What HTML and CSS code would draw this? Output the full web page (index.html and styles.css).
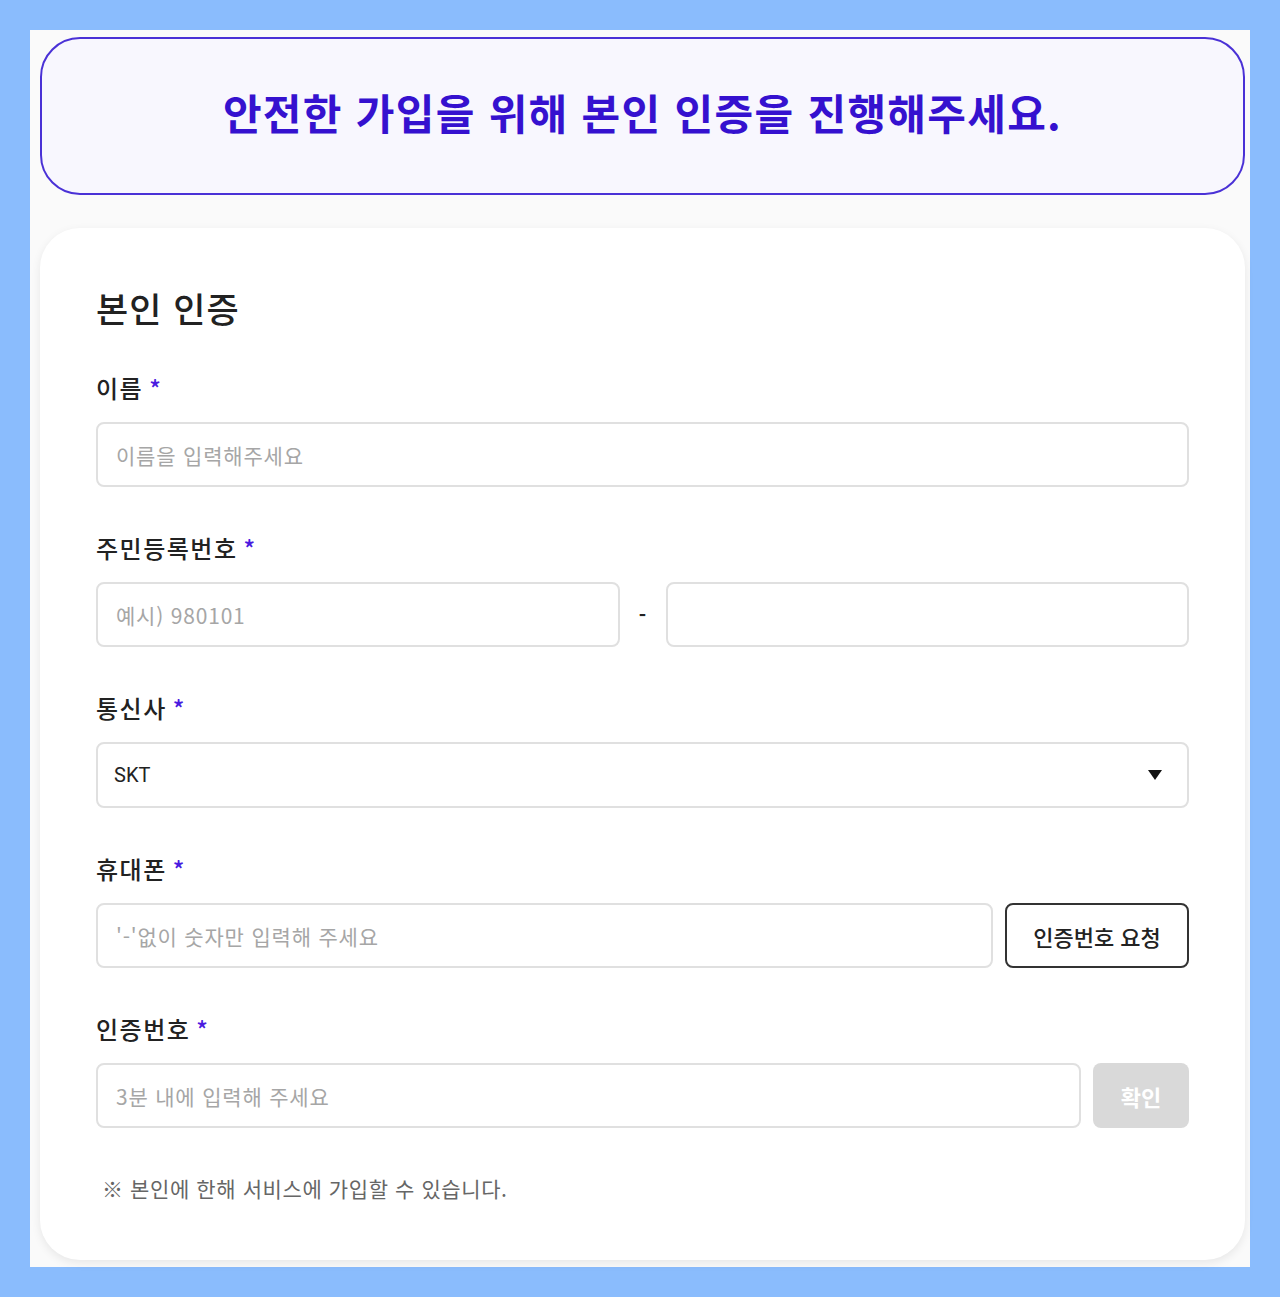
FILE: index.html
```html
<!DOCTYPE html>
<html lang="ko">
    <head>
        <meta charset="UTF-8" />
        <meta name="viewport" content="width=device-width, initial-scale=1.0" />
        <title>본인 인증</title>
        <link rel="stylesheet" href="styles.css">
    </head>
    <body>
        <div class="page">
            <div class="notice">
                <h1>안전한 가입을 위해 본인 인증을 진행해주세요.</h1>
            </div>

            <div class="card">
                <h2>본인 인증</h2>

                <div class="field">
                    <label>이름<span class="req">*</span></label>
                    <input type="text" placeholder="이름을 입력해주세요">
                </div>

                <div class="field">
                    <label>주민등록번호<span class="req">*</span></label>
                    <div class="row">
                        <input type="text" placeholder="예시) 980101">
                        <span class="dash">-</span>
                        <input type="password">
                    </div>
                </div>

                <div class="field">
                    <label>통신사<span class="req">*</span></label>
                    <div class="select">
                        <span>SKT</span>
                        <svg width="16" height="12" viewBox="0 0 16 12">
                            <path d="M1 1h14L8 11z" fill="#111" />
                        </svg>
                    </div>
                </div>

                <div class="field">
                    <label>휴대폰<span class="req">*</span></label>
                    <div class="row">
                        <input type="text" placeholder="'-'없이 숫자만 입력해 주세요">
                        <button class="btn-outline">인증번호 요청</button>
                    </div>
                </div>

                <div class="field">
                    <label>인증번호<span class="req">*</span></label>
                    <div class="row">
                        <input type="text" placeholder="3분 내에 입력해 주세요">
                        <button class="btn-disabled">확인</button>
                    </div>
                </div>

                <p class="note">※ 본인에 한해 서비스에 가입할 수 있습니다.</p>
            </div>
        </div>
    </body>
</html>
```

FILE: styles.css
```css
* {
    box-sizing: border-box;
}
body {
    margin: 0;
    padding: 30px;
    background-color: #8abcfd;
    font-family: "Noto Sans CJK KR", "Noto Sans", sans-serif;
    color: #222;
}
.page {
    background-color: #fafafa;
    padding: 7px 5px 7px 10px;
    height: 1237px;
}
.notice {
    height: 158px;
    border: 2px solid #4a31d6;
    border-radius: 40px;
    background-color: #f8f7fe;
    display: flex;
    align-items: center;
    justify-content: center;
}
.notice h1 {
    margin: 0 0 10px;
    font-size: 42px;
    font-weight: 700;
    color: #3511cf;
    letter-spacing: 1.3px;
}
.card {
    margin-top: 33px;
    background-color: #fff;
    border-radius: 40px;
    box-shadow: 0 3px 10px rgba(0, 0, 0, 0.08);
    padding: 56px 56px 50px;
    height: 1032px;
}
.card h2 {
    margin: 0 0 40px;
    font-size: 35px;
    font-weight: 500;
    line-height: 48px;
    letter-spacing: 1px;
    color: #222;
}
.field {
    margin-bottom: 45px;
}
.field label {
    display: block;
    font-size: 24px;
    font-weight: 500;
    line-height: 32px;
    letter-spacing: 1.5px;
    margin-bottom: 18px;
    color: #222;
}
.req {
    margin-left: 6px;
    color: #4a1be0;
}
input {
    display: block;
    width: 100%;
    height: 65px;
    border: 2px solid #e0e0e0;
    border-radius: 8px;
    padding: 0 18px;
    font-family: inherit;
    font-size: 21px;
    letter-spacing: 0.8px;
    color: #222;
    background: #fff;
}
input::placeholder {
    color: #a6a6a6;
}
.row {
    display: flex;
    align-items: center;
    gap: 12px;
}
.row input {
    flex: 1;
}
.dash {
    width: 22px;
    text-align: center;
    font-size: 20px;
    font-weight: 700;
}
.select {
    height: 66px;
    border: 2px solid #e0e0e0;
    border-radius: 8px;
    padding: 0 24px 0 16px;
    display: flex;
    align-items: center;
    justify-content: space-between;
    font-family: Roboto, "Noto Sans CJK KR", sans-serif;
    font-size: 20px;
}
button {
    height: 65px;
    border-radius: 8px;
    font-family: inherit;
    font-size: 22px;
    font-weight: 500;
    cursor: pointer;
}
.btn-outline {
    width: 184px;
    background: #fff;
    border: 2px solid #333;
    color: #222;
}
.btn-disabled {
    width: 96px;
    background: #d9d9d9;
    border: none;
    color: #fff;
    font-weight: 700;
}
.note {
    margin: 44px 0 0 6px;
    font-size: 21px;
    letter-spacing: 0.6px;
    color: #666;
}
```
